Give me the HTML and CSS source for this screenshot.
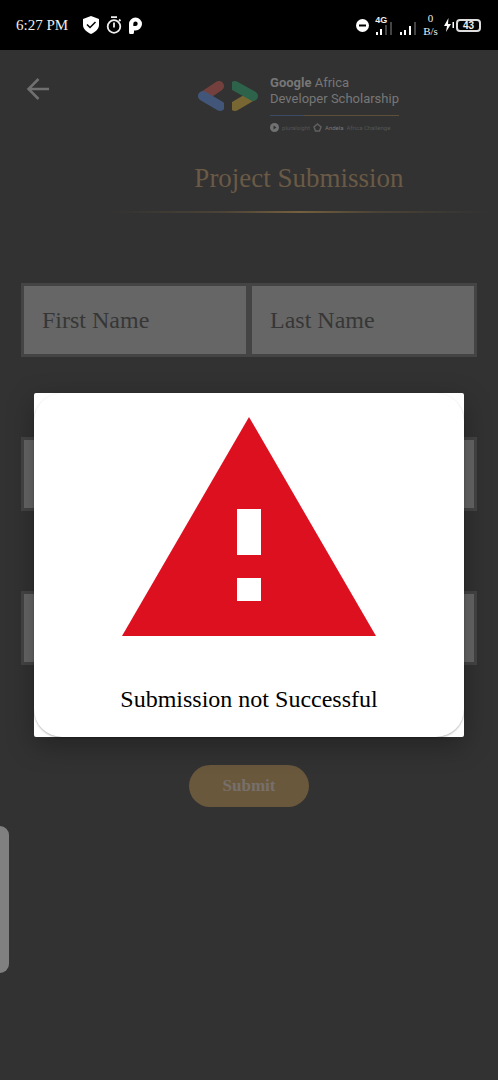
FILE: index.html
```html
<!DOCTYPE html>
<html lang="en">
<head>
<meta charset="utf-8">
<meta name="viewport" content="width=device-width, initial-scale=1">
<title>Project Submission</title>
<link rel="stylesheet" href="styles.css">
</head>
<body>
<div class="status">
  <div class="status-group">
    <span class="clock">6:27 PM</span>
    <svg width="16" height="18" viewBox="0 0 16 18"><path d="M8 0 16 3v6c0 4-3.500 7-8 9-4.500-2-8-5-8-9V3z" fill="#fff"/><path d="m4 8.500 3 3 5.500-5.500" fill="none" stroke="#000" stroke-width="1.500"/></svg>
    <svg width="16" height="18" viewBox="0 0 16 18" fill="none" stroke="#eee" stroke-width="1.800"><circle cx="8" cy="10.500" r="6.300"/><path d="M5 1.200h6M8 6.500v5M13 3.500l1.500 1.500"/></svg>
    <svg width="13" height="17" viewBox="0 0 13 17"><path fill="#fff" fill-rule="evenodd" d="M0 15V7a6.500 6.500 0 1 1 6.500 6.500H5V15a2.500 2.500 0 0 1-5 0zM6.500 4.500a2.200 2.200 0 0 0-2.200 2.200v2.200h2.200a2.200 2.200 0 0 0 0-4.400z"/></svg>
  </div>
  <div class="status-group status-right">
    <svg width="13" height="13" viewBox="0 0 13 13"><circle cx="6.500" cy="6.500" r="6.500" fill="#fff"/><path d="M3 6.500h7" stroke="#000" stroke-width="2"/></svg>
    <div class="cell">
      <span class="cell-label">4G</span>
      <svg width="18" height="14" viewBox="0 0 18 14"><path d="M1 11h2v3H1zM5 8h2v6H5z" fill="#fff"/><path d="M10 4h2v10h-2zM15 1h2v13h-2z" fill="#444"/></svg>
    </div>
    <svg class="signal" width="18" height="14" viewBox="0 0 18 14"><path d="M1 11h2v3H1zM5 9h2v5H5zM10 5h2v9h-2z" fill="#fff"/><path d="M15 1h2v13h-2z" fill="#444"/></svg>
    <div class="speed"><span>0</span><span>B/s</span></div>
    <div class="battery">
      <svg width="10" height="14" viewBox="0 0 10 14"><path d="M4.500 0 0 8h3L2 14l5-8H4z" fill="#fff"/><path d="M8.500 4h1.500v6H8.500z" fill="#fff"/></svg>
      <span class="battery-level">43</span>
    </div>
  </div>
</div>

<main class="page">
  <header class="top">
    <button class="back" type="button" aria-label="Back">
      <svg width="24" height="24" viewBox="0 0 24 24" fill="none" stroke="#707070" stroke-width="2.500"><path d="M23 12H3M12.500 2 2.500 12l10 10"/></svg>
    </button>
    <div class="brand">
      <svg width="62" height="32" viewBox="0 0 62 32" fill="none" stroke-width="10">
        <clipPath id="left"><path d="M0 0h27v32H0z"/></clipPath>
        <clipPath id="right"><path d="M35 0h27v32H35z"/></clipPath>
        <g clip-path="url(#left)" stroke-linecap="round"><path d="M7 16 22 6" stroke="#74403d"/><path d="m6 16 17 10" stroke="#42567a"/></g>
        <g clip-path="url(#right)" stroke-linecap="round"><path d="m38 26 17-10" stroke="#796733"/><path d="m38 6 18 10" stroke="#2e634b"/></g>
      </svg>
      <div class="brand-text">
        <span><b>Google</b> Africa</span>
        <span>Developer Scholarship</span>
        <div class="brand-rule"></div>
        <div class="partners">
          <svg width="9" height="9" viewBox="0 0 9 9"><circle cx="4.500" cy="4.500" r="4.500" fill="#717171"/><path d="m3.500 2.500 3 2-3 2z" fill="#323232"/></svg>
          <span class="faint">pluralsight</span>
          <svg width="9" height="9" viewBox="0 0 9 9" fill="none" stroke="#606060" stroke-width="1.500"><path d="m4.500 1 3.500 3-1.500 4h-4L1 4z"/></svg>
          <span>Andela</span>
          <span class="faint">Africa Challenge</span>
        </div>
      </div>
    </div>
    <h1 class="title">Project Submission</h1>
    <div class="divider"></div>
  </header>

  <form class="form">
    <div class="names">
      <input class="field" type="text" placeholder="First Name" aria-label="First Name">
      <input class="field" type="text" placeholder="Last Name" aria-label="Last Name">
    </div>
    <input class="field" type="email" aria-label="Email Address">
    <input class="field" type="url" aria-label="Project Link">
    <button class="submit" type="button">Submit</button>
  </form>

  <div class="overlay">
    <div class="dialog" role="alertdialog" aria-labelledby="message">
      <div class="card">
        <svg class="warning" viewBox="0 0 254 219"><path d="M127 0 254 219H0z" fill="#dd1020"/><path d="M115 92h24v46h-24zM115 161h24v23h-24z" fill="#fff"/></svg>
        <p class="message" id="message">Submission not Successful</p>
      </div>
    </div>
  </div>
</main>
<div class="edge-handle"></div>
</body>
</html>
```
FILE: styles.css
```css
* { box-sizing: border-box; }

body {
  margin: 0;
  min-height: 100vh;
  display: flex;
  flex-direction: column;
  background: #323232;
  font-family: "Liberation Serif", serif;
}

svg { display: block; flex: none; }

.status {
  height: 50px;
  padding: 0 17px 0 16px;
  display: flex;
  align-items: center;
  justify-content: space-between;
  background: #000;
  color: #eee;
}
.status-group { display: flex; align-items: center; gap: 7px; }
.status-right { gap: 6px; }
.clock { font-size: 15px; margin-right: 8px; }
.cell {
  display: flex;
  flex-direction: column;
  font: bold 9px/8px "Liberation Sans", sans-serif;
}
.cell svg { margin-top: -3px; }
.signal { margin-top: 5px; }
.speed {
  display: flex;
  flex-direction: column;
  align-items: center;
  font-size: 11px;
  line-height: 13px;
}
.battery { display: flex; align-items: center; gap: 2px; }
.battery-level {
  border: 2px solid #ddd;
  border-radius: 4px;
  padding: 0 5px;
  font: bold 10px/9px "Liberation Sans", sans-serif;
}

.page {
  position: relative;
  flex: 1;
  display: flex;
  flex-direction: column;
}

.top {
  display: grid;
  grid-template-columns: 100px 1fr;
  padding-top: 25px;
}
.back {
  justify-self: start;
  align-self: start;
  margin: 2px 0 0 26px;
  padding: 0;
  border: 0;
  background: none;
}
.brand {
  justify-self: center;
  display: flex;
  gap: 11px;
  padding-right: 2px;
  color: #777;
}
.brand > svg { margin-top: 5px; }
.brand-text {
  display: flex;
  flex-direction: column;
  font: 13px/16px Roboto, sans-serif;
}
.brand-rule {
  height: 1px;
  margin: 8px 0 7px;
  background: linear-gradient(90deg, #3b4b66 26%, #5b5038 26%);
}
.partners {
  display: flex;
  align-items: center;
  gap: 3px;
  font-size: 6px;
  line-height: 9px;
}
.faint { color: #555; }
.title {
  grid-column: 2;
  justify-self: center;
  margin: 31px 0 17px;
  font-size: 27px;
  line-height: 31px;
  font-weight: 400;
  color: #6a5a46;
}
.divider {
  grid-column: 2;
  height: 2px;
  margin: 0 10px;
  background: linear-gradient(90deg, #323232, #4b4336 30%, #74603f 50%, #4b4336 70%, #323232);
}

.form {
  display: flex;
  flex-direction: column;
  gap: 80px;
  padding: 70px 21px 0;
}
.names { display: grid; grid-template-columns: 1fr 1fr; }
.field {
  width: 100%;
  min-width: 0;
  height: 74px;
  padding: 0 18px;
  border: 3px solid #444;
  border-radius: 0;
  background: #666;
  font: 24px "Liberation Serif", serif;
  color: #333;
}
.field::placeholder { color: #363636; opacity: 1; }
.submit {
  align-self: center;
  margin-top: 20px;
  padding: 0 34px;
  height: 42px;
  border: 0;
  border-radius: 21px;
  background: #6a583d;
  color: #77706a;
  font: bold 17px "Liberation Serif", serif;
}

.overlay {
  position: absolute;
  inset: 0;
  display: flex;
  align-items: center;
  justify-content: center;
  padding: 0 34px;
}
.dialog {
  width: 100%;
  background: #fff;
  border-radius: 2px;
  box-shadow: 0 8px 28px rgba(0, 0, 0, 0.3);
}
.card {
  display: flex;
  flex-direction: column;
  align-items: center;
  padding: 24px 16px;
  border-radius: 28px;
  box-shadow: 0 1px 2px rgba(0, 0, 0, 0.3);
}
.warning { width: 254px; }
.message {
  margin: 49px 0 0;
  font-size: 24px;
  line-height: 28px;
  color: #000;
}

.edge-handle {
  position: absolute;
  left: 0;
  top: 826px;
  width: 9px;
  height: 147px;
  border-radius: 0 10px 10px 0;
  background: #808080;
}
```
